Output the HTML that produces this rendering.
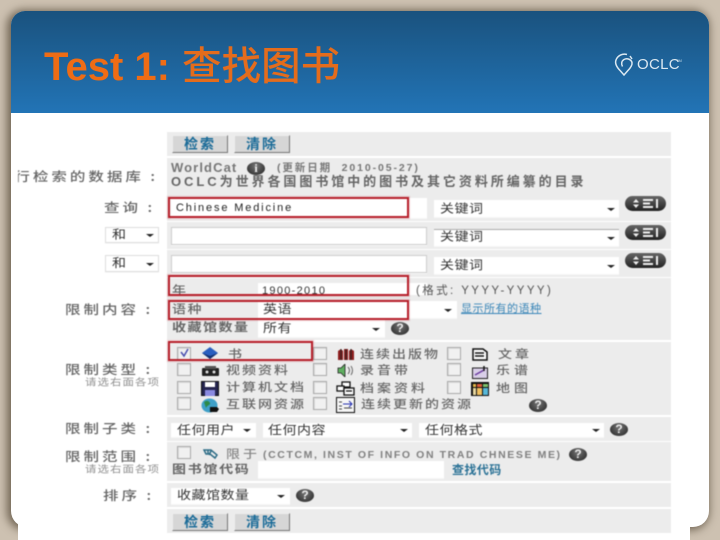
<!DOCTYPE html>
<html lang="zh"><head><meta charset="utf-8"><title>Test 1</title>
<style>
html,body{margin:0;padding:0;width:720px;height:540px;overflow:hidden;background:#cdc1b1}
*{box-sizing:border-box}
div,span,a,svg{position:absolute}
.sl{left:11px;top:11px;width:698px;height:516px;background:#fff;border-radius:14px 14px 16px 16px;box-shadow:-2px 1px 9px 2px #6f6352}
.hd{left:11px;top:11px;width:698px;height:102px;border-radius:14px 14px 0 0;background:linear-gradient(#1a527e,#2274b6)}
.wb{left:18px;top:520px;width:672px;height:20px;background:#fff}
.title{left:44px;top:39px;font:bold 40px/50px "Liberation Sans","Noto Sans CJK SC",sans-serif;color:#ee6c15;white-space:nowrap}
.title span{position:static;font:500 39.500px/50px "Noto Sans CJK SC",sans-serif;color:#e46c1c;margin-left:1px}
.pn{left:0;top:0;width:720px;height:540px;filter:blur(.45px)}
.r{left:167px;width:504px;background:#ececec}
.t{font:12px/14px "Liberation Sans","Noto Sans CJK SC",sans-serif;color:#4c4c4c;white-space:nowrap}
.l{font:15.500px/14px "Noto Sans CJK SC",sans-serif;color:#666;letter-spacing:3px;white-space:nowrap;font-weight:500;transform:scaleY(.82)}
.s{font:11.500px/12px "Noto Sans CJK SC",sans-serif;color:#8f8f8f;letter-spacing:1px;white-space:nowrap;transform:scaleY(.85)}
.g{font:14px/14px "Noto Sans CJK SC",sans-serif;color:#666;letter-spacing:1.500px;white-space:nowrap;font-weight:500;transform:scaleY(.82)}
.d{font:14px/14px "Noto Sans CJK SC",sans-serif;color:#333;letter-spacing:.5px;white-space:nowrap;transform:scaleY(.85)}
.w{background:#fff;box-shadow:0 1px 0 #f7f7f7}
.a{width:0;height:0;border-left:4px solid transparent;border-right:4px solid transparent;border-top:3px solid #222}
.b{left:172px;width:56px;height:18px;background:#d6d6d6;border:1px solid;border-color:#eee #777 #777 #eee;font:bold 14px/16px "Noto Sans CJK SC",sans-serif;color:#1a6b98;letter-spacing:2px;text-align:center}
.red{border:2px solid #b7202b;box-shadow:0 0 1px 1px rgba(183,32,43,.2)}
.c{width:14px;height:13px;background:#f1f1f1;border:1px solid #aaa;box-shadow:inset 1px 1px 0 #ddd}
.q{width:18px;height:13px;border-radius:50%;background:radial-gradient(circle at 50% 30%,#777,#222);color:#eee;font:bold 12px/13px "Liberation Sans",sans-serif;text-align:center}
.p{left:625px;width:41px;height:15px;border-radius:8px;background:linear-gradient(#666,#222)}
.p svg{left:6px;top:2px}
</style></head><body>
<div class="sl"></div><div class="wb"></div><div class="hd"></div>
<div class="title">Test 1: <span>查找图书</span></div>
<svg style="left:613px;top:52px" width="22" height="25" viewBox="0 0 22 25" fill="none" stroke="#dbe8f1" stroke-width="1.500"><path d="M14 2.500A9 9 0 0 0 3 8c-1.500 4 1 7.500 4.500 11l3.500 4 3.500-4c2.500-2.500 5-5.500 4.500-8.500C18 7 14 6 11 7.500 8.500 9 8 12 9.500 14.500"/><path d="M17 4l2 3"/></svg>
<div class="t" style="left:637px;top:55px;font-size:15px;line-height:20px;color:#dbe8f1;letter-spacing:.3px">OCLC</div>
<div class="t" style="left:676px;top:58px;font-size:4px;line-height:5px;color:#c8dce8">TM</div>

<div class="pn">
<div class="r" style="top:132px;height:24px"></div>
<div class="r" style="top:158px;height:35px"></div>
<div class="r" style="top:193px;height:28px"></div>
<div class="r" style="top:222px;height:27px"></div>
<div class="r" style="top:250px;height:27px"></div>
<div class="r" style="top:278px;height:62px"></div>
<div class="r" style="top:342px;height:73px"></div>
<div class="r" style="top:417px;height:24px"></div>
<div class="r" style="top:442px;height:39px"></div>
<div class="r" style="top:483px;height:24px"></div>
<div class="r" style="top:509px;height:24px"></div>

<!-- left labels -->
<div style="left:18px;top:166px;width:140px;height:20px;overflow:hidden"><div class="l" style="right:0;top:3px">行检索的数据库 :</div></div>
<div class="l" style="left:104px;top:200px">查询 :</div>
<div class="l" style="left:65px;top:302px">限制内容 :</div>
<div class="l" style="left:65px;top:362px">限制类型 :</div>
<div class="s" style="left:85px;top:376px">请选右面各项</div>
<div class="l" style="left:65px;top:421px">限制子类 :</div>
<div class="l" style="left:65px;top:449px">限制范围 :</div>
<div class="s" style="left:85px;top:463px">请选右面各项</div>
<div class="l" style="left:103px;top:488px">排序 :</div>

<!-- buttons -->
<div class="b" style="top:135px">检索</div>
<div class="b" style="top:135px;left:234px">清除</div>
<div class="b" style="top:513px">检索</div>
<div class="b" style="top:513px;left:234px">清除</div>

<!-- database -->
<div class="t" style="left:171px;top:161px;font-size:13px;font-weight:bold;color:#777;letter-spacing:1.100px">WorldCat</div>
<div class="q" style="left:247px;top:162px;font-family:'Liberation Serif',serif">i</div>
<div class="t" style="left:277px;top:161px;font-size:10.500px;font-weight:bold;color:#777;letter-spacing:1.900px">(更新日期&nbsp; 2010-05-27)</div>
<div class="t" style="left:171px;top:175px;font-weight:bold;color:#666;font-size:13px;letter-spacing:2.950px">OCLC为世界各国图书馆中的图书及其它资料所编纂的目录</div>

<!-- query rows -->
<div class="w" style="left:171px;top:198px;width:256px;height:20px"></div>
<div class="t" style="left:176px;top:201px;font-size:11px;color:#222;letter-spacing:1.850px">Chinese Medicine</div>
<div class="w" style="left:434px;top:200px;width:185px;height:17px"></div>
<div class="d" style="left:440px;top:201px">关键词</div><div class="a" style="left:607px;top:208px"></div>
<div class="p" style="top:196px"><svg width="29" height="11" viewBox="0 0 29 11" fill="#eee"><path d="M5 1l3 3.500H2zM5 10l3-3.500H2zM12 1h10v2H12zM12 4.500h7v2h-7zM12 8h10v2H12zM25 1h2v9h-2z"/></svg></div>

<div class="w" style="left:105px;top:227px;width:54px;height:16px;border:1px solid #ddd"></div>
<div class="d" style="left:112px;top:227px">和</div><div class="a" style="left:146px;top:234px"></div>
<div class="w" style="left:171px;top:227px;width:256px;height:18px;border:1px solid #ccc"></div>
<div class="w" style="left:434px;top:229px;width:185px;height:17px;border-top:1px solid #aaa"></div>
<div class="d" style="left:440px;top:229px">关键词</div><div class="a" style="left:607px;top:237px"></div>
<div class="p" style="top:225px"><svg width="29" height="11" viewBox="0 0 29 11" fill="#eee"><path d="M5 1l3 3.500H2zM5 10l3-3.500H2zM12 1h10v2H12zM12 4.500h7v2h-7zM12 8h10v2H12zM25 1h2v9h-2z"/></svg></div>

<div class="w" style="left:105px;top:255px;width:54px;height:17px;border:1px solid #ddd"></div>
<div class="d" style="left:112px;top:256px">和</div><div class="a" style="left:146px;top:263px"></div>
<div class="w" style="left:171px;top:255px;width:256px;height:18px;border:1px solid #ccc"></div>
<div class="w" style="left:434px;top:257px;width:185px;height:17px"></div>
<div class="d" style="left:440px;top:258px">关键词</div><div class="a" style="left:607px;top:265px"></div>
<div class="p" style="top:253px"><svg width="29" height="11" viewBox="0 0 29 11" fill="#eee"><path d="M5 1l3 3.500H2zM5 10l3-3.500H2zM12 1h10v2H12zM12 4.500h7v2h-7zM12 8h10v2H12zM25 1h2v9h-2z"/></svg></div>

<!-- limit content -->
<div style="left:167px;top:276px;width:260px;height:19px;overflow:hidden">
<div class="g" style="left:5px;top:7px">年</div>
<div class="w" style="left:91px;top:7px;width:169px;height:14px"></div>
<div class="t" style="left:95px;top:8px;font-size:11px;color:#333;letter-spacing:1.300px">1900-2010</div>
</div>
<div class="t" style="left:416px;top:284px;font-size:11.500px;color:#555;letter-spacing:2.400px">(格式: YYYY-YYYY)</div>
<div class="g" style="left:172px;top:302px">语种</div>
<div class="w" style="left:258px;top:301px;width:199px;height:17px"></div>
<div class="d" style="left:263px;top:302px">英语</div><div class="a" style="left:444px;top:309px"></div>
<a class="t" style="left:461px;top:303px;font-size:11px;line-height:12px;letter-spacing:.5px;color:#3a86b8;text-decoration:underline">显示所有的语种</a>
<div class="g" style="left:172px;top:320px;font-weight:700">收藏馆数量</div>
<div class="w" style="left:258px;top:320px;width:127px;height:17px"></div>
<div class="d" style="left:263px;top:321px">所有</div><div class="a" style="left:372px;top:328px"></div>
<div class="q" style="left:391px;top:322px">?</div>

<!-- types -->
<div class="c" style="left:177px;top:347px"></div>
<svg style="left:179px;top:348px" width="11" height="10" viewBox="0 0 11 10" fill="none" stroke="#4a4fb0" stroke-width="1.500"><path d="M2 4l3 4 4-7"/></svg>
<div class="c" style="left:177px;top:363px"></div>
<div class="c" style="left:177px;top:381px"></div>
<div class="c" style="left:177px;top:397px"></div>
<div class="c" style="left:313px;top:347px"></div>
<div class="c" style="left:313px;top:363px"></div>
<div class="c" style="left:313px;top:381px"></div>
<div class="c" style="left:313px;top:397px"></div>
<div class="c" style="left:447px;top:347px"></div>
<div class="c" style="left:447px;top:363px"></div>
<div class="c" style="left:447px;top:381px"></div>

<svg style="left:202px;top:347px" width="17" height="12" viewBox="0 0 17 12"><path d="M8 0L16 6 8 12 0 6z" fill="#2a5fc0"/><path d="M0 6l8 6 8-6-8 3z" fill="#13306e"/></svg>
<svg style="left:202px;top:365px" width="17" height="11" viewBox="0 0 17 11"><rect x="0" y="3" width="17" height="8" rx="1" fill="#222"/><rect x="3" y="1" width="11" height="3" fill="#555"/><circle cx="5" cy="7" r="1.500" fill="#ddd"/><circle cx="12" cy="7" r="1.500" fill="#ddd"/></svg>
<svg style="left:201px;top:381px" width="18" height="15" viewBox="0 0 18 15"><rect x=".5" y=".5" width="17" height="14" fill="#25254f" stroke="#111"/><rect x="4" y="1" width="10" height="5" fill="#fff"/><rect x="4" y="9" width="10" height="6" fill="#8a8ae0"/></svg>
<svg style="left:201px;top:398px" width="18" height="15" viewBox="0 0 18 15"><ellipse cx="8.500" cy="7.500" rx="8" ry="7" fill="#3fa0c8"/><path d="M3 4c3-2 5-1 6 1s-3 2-4 5z" fill="#2d8a4a"/><path d="M9 9h7l2 2-2 3H9z" fill="#111"/></svg>

<svg style="left:337px;top:348px" width="18" height="12" viewBox="0 0 18 12"><path d="M1 3l3-2 2 2v9H1zM7 1l4 0v11H7zM12 3l2-2 3 2v9h-5z" fill="#8c1d1d"/><path d="M4 1v11M9 1v11M14 1v11" stroke="#222"/></svg>
<svg style="left:337px;top:364px" width="18" height="13" viewBox="0 0 18 13"><path d="M1 4h3l4-4v13L4 9H1z" fill="#5fb060" stroke="#222" stroke-width=".8"/><path d="M11 3q3 3.500 0 7M14 2q3 4.500 0 9" stroke="#666" fill="none"/></svg>
<svg style="left:336px;top:381px" width="19" height="15" viewBox="0 0 19 15" fill="#fff" stroke="#111" stroke-width="1.300"><rect x="6" y="1" width="8" height="5"/><rect x="1" y="5" width="7" height="5"/><rect x="8" y="7" width="10" height="7"/><path d="M10 10h6"/></svg>
<svg style="left:336px;top:397px" width="19" height="16" viewBox="0 0 19 16" fill="none" stroke="#111"><rect x=".5" y=".5" width="18" height="15" fill="#f6f6f6"/><path d="M3 5h3M3 9h3M3 12h3" stroke="#444"/><path d="M7 7h9M13 4l3 3-3 3" stroke="#2530b0"/><path d="M16 11H8" stroke="#444"/></svg>

<svg style="left:472px;top:348px" width="16" height="13" viewBox="0 0 16 13" fill="#fff" stroke="#111" stroke-width="1.500"><path d="M1 1h10l4 3v8H1zM3 5h9M3 8h9"/></svg>
<svg style="left:472px;top:366px" width="16" height="13" viewBox="0 0 16 13"><rect x=".5" y="2" width="15" height="10.500" fill="#d9cfe8" stroke="#222"/><path d="M3 9l9-5" stroke="#6a3aa0" stroke-width="1.500"/><path d="M12 0v5" stroke="#111" stroke-width="1.500"/></svg>
<svg style="left:471px;top:382px" width="18" height="14" viewBox="0 0 18 14"><rect width="18" height="14" fill="#111"/><rect x="2" y="2" width="3" height="3" fill="#e5b84a"/><rect x="6" y="2" width="5" height="3" fill="#e05c3a"/><rect x="12" y="2" width="5" height="3" fill="#7fc36b"/><rect x="2" y="6" width="3" height="7" fill="#e8d8a0"/><rect x="6" y="6" width="5" height="7" fill="#f0c060"/><rect x="12" y="6" width="5" height="7" fill="#58b8d8"/></svg>

<div class="g" style="left:228px;top:347px">书</div>
<div class="g" style="left:226px;top:363px;letter-spacing:2px">视频资料</div>
<div class="g" style="left:226px;top:380px;letter-spacing:2px">计算机文档</div>
<div class="g" style="left:226px;top:397px;letter-spacing:2px">互联网资源</div>
<div class="g" style="left:360px;top:347px;letter-spacing:2px">连续出版物</div>
<div class="g" style="left:360px;top:363px;letter-spacing:3px">录音带</div>
<div class="g" style="left:360px;top:381px;letter-spacing:3px">档案资料</div>
<div class="g" style="left:361px;top:397px;letter-spacing:2px">连续更新的资源</div>
<div class="g" style="left:498px;top:347px;letter-spacing:3px">文章</div>
<div class="g" style="left:496px;top:363px;letter-spacing:4px">乐谱</div>
<div class="g" style="left:496px;top:381px;letter-spacing:4px">地图</div>
<div class="q" style="left:529px;top:399px">?</div>

<!-- subtype -->
<div class="w" style="left:171px;top:423px;width:85px;height:14px"></div>
<div class="d" style="left:177px;top:423px">任何用户</div><div class="a" style="left:243px;top:429px"></div>
<div class="w" style="left:263px;top:423px;width:149px;height:14px"></div>
<div class="d" style="left:268px;top:423px">任何内容</div><div class="a" style="left:400px;top:429px"></div>
<div class="w" style="left:419px;top:423px;width:185px;height:14px"></div>
<div class="d" style="left:425px;top:423px">任何格式</div><div class="a" style="left:592px;top:429px"></div>
<div class="q" style="left:610px;top:423px">?</div>

<!-- scope -->
<div class="c" style="left:177px;top:446px"></div>
<svg style="left:203px;top:448px" width="16" height="12" viewBox="0 0 16 12" fill="none" stroke="#2d6c86" stroke-width="1.500"><path d="M1 2h7l6 5-2 3-5-4H3zM5 2v4M8 3L6 7"/></svg>
<div class="g" style="left:226px;top:447px;letter-spacing:3px;color:#888">限于</div>
<div class="t" style="left:263px;top:448px;font-size:10.500px;font-weight:bold;color:#808080;letter-spacing:1.600px">(CCTCM, INST OF INFO ON TRAD CHNESE ME)</div>
<div class="q" style="left:569px;top:448px">?</div>
<div class="g" style="left:172px;top:462px;letter-spacing:1.700px;font-weight:700">图书馆代码</div>
<div class="w" style="left:258px;top:461px;width:186px;height:17px"></div>
<a class="t" style="left:452px;top:464px;font-size:12px;line-height:12px;font-weight:bold;letter-spacing:.4px;color:#2b7296;font-family:'Noto Sans CJK SC',sans-serif">查找代码</a>

<!-- sort -->
<div class="w" style="left:171px;top:488px;width:119px;height:16px"></div>
<div class="d" style="left:177px;top:488px">收藏馆数量</div><div class="a" style="left:277px;top:495px"></div>
<div class="q" style="left:296px;top:489px">?</div>

<!-- red highlight boxes -->
<div class="red" style="left:168px;top:197px;width:241px;height:21px"></div>
<div class="red" style="left:168px;top:275px;width:241px;height:21px"></div>
<div class="red" style="left:168px;top:300px;width:241px;height:20px"></div>
<div class="red" style="left:168px;top:341px;width:145px;height:20px"></div>
</div>
</body></html>
